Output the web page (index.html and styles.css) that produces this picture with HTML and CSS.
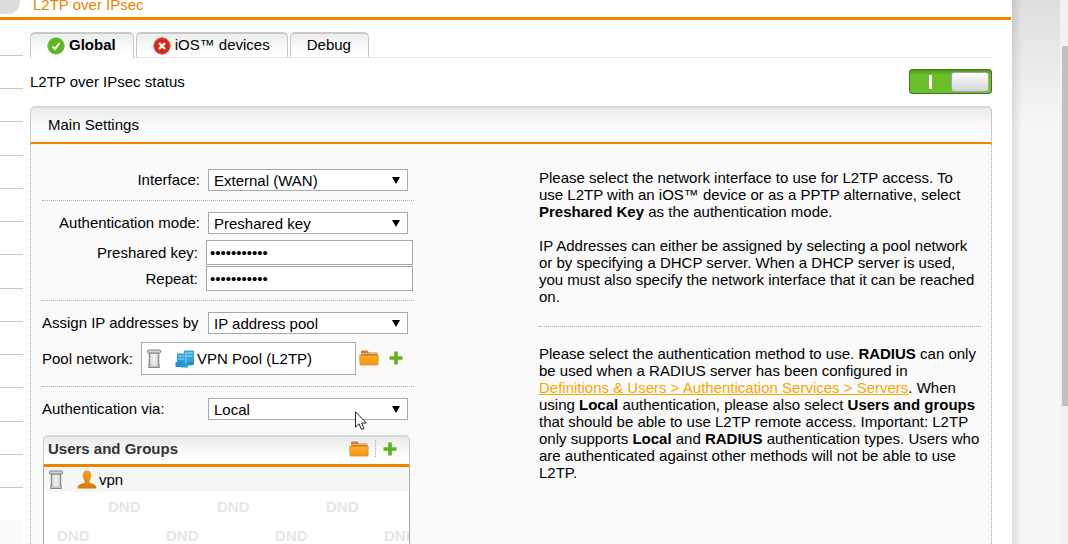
FILE: index.html
```html
<!DOCTYPE html>
<html lang="en">
<head>
    <meta charset="UTF-8">
    <meta name="viewport" content="width=device-width, initial-scale=1.0">
    <title>L2TP over IPsec</title>
    <link rel="stylesheet" href="styles.css">
</head>
<body>
    <!-- shared icons -->
    <svg class="sprite" aria-hidden="true">
        <defs>
            <linearGradient id="gFolder" x1="0" y1="0" x2="0" y2="1">
                <stop offset="0" stop-color="#fbb030"/>
                <stop offset="1" stop-color="#f9930f"/>
            </linearGradient>
            <linearGradient id="gUser" x1="0" y1="0" x2="0" y2="1">
                <stop offset="0" stop-color="#f7a11f"/>
                <stop offset="1" stop-color="#cf7a08"/>
            </linearGradient>
            <symbol id="trash" viewBox="0 0 16 20">
                <path d="M3.500 4H12.500V17H3.500Z" fill="#efefef" stroke="#8e8e8e" stroke-width="1.600"/>
                <path d="M6 6V14M10 6V14" stroke="#dadada"/>
                <rect x="1.500" y="1" width="13" height="3" rx="1" fill="#d4d4d4" stroke="#858585"/>
                <path d="M3.500 14.500L2.500 18.500H13.500L12.500 14.500" fill="#c4c4c4" stroke="#858585"/>
                <rect x="5.500" y="14.500" width="5" height="2" fill="#ededed"/>
            </symbol>
            <symbol id="folder" viewBox="0 0 20 16">
                <path d="M2 6V1.500Q2 .5 3 .5H8.500L10 2.500H18.500V6Z" fill="#c97f35"/>
                <path d="M2 3.500H18.500" stroke="#e6b27c"/>
                <path d="M.7 5.500H19.300L19 14.500Q19 15 18.300 15H1.700Q1 15 1 14.500Z" fill="url(#gFolder)" stroke="#de8a1c" stroke-width=".7"/>
            </symbol>
            <symbol id="plus" viewBox="0 0 14 14">
                <path d="M5.200 0.500H8.800V5.200H13.500V8.800H8.800V13.500H5.200V8.800H.5V5.200H5.200Z" fill="#5fb022"/>
            </symbol>
            <symbol id="network" viewBox="0 0 20 18">
                <path d="M9 .5H19V12.500L17.500 15.500H9Z" fill="#36a5de"/>
                <path d="M10.500 3H17.500M10.500 6H17.500" stroke="#a5d9f3"/>
                <path d="M12 12.500H19V14.500H12Z" fill="#1d86c2"/>
                <path d="M2 3.500H10.500V14H2Z" fill="#2b9edb"/>
                <path d="M3 6H9.500M3 9H9.500" stroke="#9dd5f2"/>
                <path d="M.5 12H8V17H.5Z" fill="#2190cf"/>
                <path d="M6.500 13.500H13V17.500H6.500Z" fill="#2b9edb"/>
                <path d="M10.800 2.500V13" stroke="#c4e6f7" stroke-width=".6"/>
            </symbol>
            <symbol id="user" viewBox="0 0 20 19">
                <path d="M10 .5C13 .5 14.500 2.600 14.200 5.500C14 8 13 9 12.500 10.500V12.500C13 14 19.500 13 19.500 18.500H.5C.5 13 7 14 7.500 12.500V10.500C7 9 6 8 5.800 5.500C5.500 2.600 7 .5 10 .5Z" fill="url(#gUser)"/>
            </symbol>
        </defs>
    </svg>

    <div class="page">
        <div class="shell">
            <header class="page-header">
                <span class="menu-corner"></span>
                <h1>L2TP over IPsec</h1>
            </header>

            <div class="columns">
                <nav class="sidebar">
                    <ul>
                        <li></li><li></li><li></li><li></li><li></li><li></li><li></li>
                        <li></li><li></li><li></li><li></li><li></li><li></li><li></li>
                    </ul>
                </nav>

                <main class="content">
                    <div class="tabs">
                        <button type="button" class="tab active">
                            <svg class="icon-status" viewBox="0 0 18 18">
                                <circle cx="9" cy="9" r="8.500" fill="#5db526"/>
                                <circle cx="9" cy="9" r="8" fill="none" stroke="#77bf49"/>
                                <path d="M5.500 9.500L8 12L12.500 6" fill="none" stroke="#fff" stroke-width="2"/>
                            </svg>
                            <span>Global</span>
                        </button>
                        <button type="button" class="tab">
                            <svg class="icon-status" viewBox="0 0 18 18">
                                <circle cx="9" cy="9" r="8.500" fill="#d3261d"/>
                                <circle cx="9" cy="9" r="8" fill="none" stroke="#dd5a50"/>
                                <path d="M6 6L12 12M12 6L6 12" stroke="#fff" stroke-width="2.400"/>
                            </svg>
                            <span>iOS™ devices</span>
                        </button>
                        <button type="button" class="tab"><span>Debug</span></button>
                    </div>

                    <div class="status-row">
                        <span id="status-label">L2TP over IPsec status</span>
                        <button type="button" class="toggle" role="switch" aria-checked="true" aria-labelledby="status-label">
                            <span class="toggle-on"></span>
                            <span class="toggle-knob"></span>
                        </button>
                    </div>

                    <section class="panel">
                        <h2 class="panel-title">Main Settings</h2>
                        <div class="panel-body">
                            <form class="settings">
                                <div class="group">
                                    <div class="row">
                                        <label for="interface">Interface:</label>
                                        <div class="select">
                                            <select id="interface"><option>External (WAN)</option></select>
                                        </div>
                                    </div>
                                </div>

                                <div class="group">
                                    <div class="row">
                                        <label for="auth-mode">Authentication mode:</label>
                                        <div class="select">
                                            <select id="auth-mode"><option>Preshared key</option></select>
                                        </div>
                                    </div>
                                    <div class="keys">
                                        <div class="row row-key">
                                            <label for="psk">Preshared key:</label>
                                            <input type="password" id="psk" value="presharedky">
                                        </div>
                                        <div class="row row-key">
                                            <label for="psk-repeat">Repeat:</label>
                                            <input type="password" id="psk-repeat" value="presharedky">
                                        </div>
                                    </div>
                                </div>

                                <div class="group">
                                    <div class="row row-left">
                                        <label for="assign">Assign IP addresses by</label>
                                        <div class="select">
                                            <select id="assign"><option>IP address pool</option></select>
                                        </div>
                                    </div>
                                    <div class="row-pool">
                                        <span class="pool-label">Pool network:</span>
                                        <div class="pool-box">
                                            <button type="button" class="icon-btn" aria-label="Remove"><svg class="icon-trash"><use href="#trash"/></svg></button>
                                            <svg class="icon-network"><use href="#network"/></svg>
                                            <span>VPN Pool (L2TP)</span>
                                        </div>
                                        <button type="button" class="icon-btn" aria-label="Browse"><svg class="icon-folder"><use href="#folder"/></svg></button>
                                        <button type="button" class="icon-btn pool-add" aria-label="Add"><svg class="icon-plus"><use href="#plus"/></svg></button>
                                    </div>
                                </div>

                                <div class="group">
                                    <div class="row row-left">
                                        <label for="auth-via">Authentication via:</label>
                                        <div class="select">
                                            <select id="auth-via"><option>Local</option></select>
                                            <svg class="cursor" viewBox="0 0 12 20">
                                                <path d="M.5 .8V16.200L4 12.800L6.500 18.500L9 17.400L6.600 12H11.300Z" fill="#fff" stroke="#222"/>
                                            </svg>
                                        </div>
                                    </div>

                                    <div class="list">
                                        <div class="list-header">
                                            <h3>Users and Groups</h3>
                                            <button type="button" class="icon-btn" aria-label="Browse"><svg class="icon-folder"><use href="#folder"/></svg></button>
                                            <span class="divider"></span>
                                            <button type="button" class="icon-btn" aria-label="Add"><svg class="icon-plus"><use href="#plus"/></svg></button>
                                        </div>
                                        <div class="list-item">
                                            <button type="button" class="icon-btn" aria-label="Remove"><svg class="icon-trash"><use href="#trash"/></svg></button>
                                            <svg class="icon-user"><use href="#user"/></svg>
                                            <span>vpn</span>
                                        </div>
                                        <div class="dropzone">
                                            <div class="dnd dnd-odd"><span>DND</span><span>DND</span><span>DND</span></div>
                                            <div class="dnd"><span>DND</span><span>DND</span><span>DND</span><span>DND</span></div>
                                        </div>
                                    </div>
                                </div>
                            </form>

                            <div class="help">
                                <div class="help-block">
                                    <p>Please select the network interface to use for L2TP access. To use L2TP with an iOS™ device or as a PPTP alternative, select <b>Preshared Key</b> as the authentication mode.</p>
                                    <p>IP Addresses can either be assigned by selecting a pool network or by specifying a DHCP server. When a DHCP server is used, you must also specify the network interface that it can be reached on.</p>
                                </div>
                                <div class="help-block">
                                    <p>Please select the authentication method to use. <b>RADIUS</b> can only be used when a RADIUS server has been configured in <a href="#">Definitions &amp; Users &gt; Authentication Services &gt; Servers</a>. When using <b>Local</b> authentication, please also select <b>Users and groups</b> that should be able to use L2TP remote access. Important: L2TP only supports <b>Local</b> and <b>RADIUS</b> authentication types. Users who are authenticated against other methods will not be able to use L2TP.</p>
                                </div>
                            </div>
                        </div>
                    </section>
                </main>
            </div>
        </div>

        <div class="gutter"></div>
        <div class="scrollbar"><div class="thumb"></div></div>
    </div>
</body>
</html>
```
FILE: styles.css
```css
:root {
    --orange: #f08200;
    --line: #a9a9a9;
    --panel: #fafafa;
}

* {
    margin: 0;
    padding: 0;
    box-sizing: border-box;
}

body {
    height: 100vh;
    overflow: hidden;
    background: #fff;
    color: #000;
    font: 15px/17px "Liberation Sans", Arial, sans-serif;
}

button,
input,
select {
    font: inherit;
    color: inherit;
}

button {
    border: none;
    background: none;
    cursor: pointer;
}

svg {
    display: block;
    flex: none;
}

.sprite {
    position: absolute;
    width: 0;
    height: 0;
}

.page {
    display: flex;
    height: 100%;
}

.shell {
    flex: 1;
    display: flex;
    flex-direction: column;
    min-width: 0;
}

/* header */
.page-header {
    display: flex;
    align-items: flex-end;
    gap: 13px;
    flex: none;
    height: 20px;
    margin-right: 1px;
    border-bottom: 3px solid var(--orange);
}

.menu-corner {
    align-self: flex-start;
    width: 20px;
    height: 14px;
    background: #dcdcdc;
    border-bottom-right-radius: 12px;
}

.page-header h1 {
    padding-bottom: 4px;
    color: var(--orange);
    font-size: 15px;
    font-weight: normal;
}

.columns {
    flex: 1;
    display: flex;
    min-height: 0;
}

/* sidebar */
.sidebar {
    flex: none;
    width: 23px;
    background: #fafafa;
}

.sidebar ul {
    list-style: none;
    background: #fdfdfd;
    padding-bottom: 32px;
}

.sidebar li {
    height: 33px;
    border-bottom: 1px solid #c8c8c8;
}

.sidebar li:nth-child(4n) {
    height: 34px;
}

.sidebar li:first-child {
    height: 36px;
}

.content {
    flex: 1;
    min-width: 0;
    padding: 12px 20px 0 7px;
}

/* tabs */
.tabs {
    display: flex;
    gap: 2px;
    border-bottom: 1px solid #e6e6e6;
}

.tab {
    display: flex;
    align-items: center;
    gap: 4px;
    height: 25px;
    padding: 0 17px 0 16px;
    border: 1px solid #c8c8c8;
    border-top-width: 2px;
    border-bottom: none;
    border-radius: 5px 5px 0 0;
    background: linear-gradient(#eaeeed, #fff 80%);
    white-space: nowrap;
}

.tab span {
    padding-bottom: 3px;
}

.tab.active {
    height: 26px;
    margin-bottom: -1px;
    font-weight: bold;
}

.tab.active span {
    padding-bottom: 4px;
}

.icon-status {
    width: 18px;
    height: 18px;
}

/* status */
.status-row {
    display: flex;
    align-items: center;
    justify-content: space-between;
    margin: 11px 0 12px;
}

.toggle {
    display: flex;
    align-items: center;
    justify-content: space-between;
    width: 83px;
    height: 25px;
    padding: 0 2px 0 19px;
    border: 1px solid #43741f;
    border-radius: 3px;
    background: linear-gradient(#4f951c, #6abf2a 5px);
}

.toggle-on {
    width: 3px;
    height: 14px;
    background: #fff;
}

.toggle-knob {
    width: 38px;
    height: 20px;
    border: 1px solid #a4a4a4;
    border-radius: 3px;
    background: linear-gradient(#fff, #d2d4d4);
}

/* panel */
.panel-title {
    height: 38px;
    padding: 8px 17px;
    border: 1px solid #c8c8c8;
    border-top: 2px solid #d8dad9;
    border-bottom: 2px solid var(--orange);
    border-radius: 5px 5px 0 0;
    background: linear-gradient(#e9eceb, #fff 70%);
    font-size: 15px;
    font-weight: normal;
}

.panel-body {
    display: grid;
    grid-template-columns: 372px 1fr;
    gap: 125px;
    padding: 14px 10px 40px 11px;
    border: 1px dotted var(--line);
    border-top: none;
    background: var(--panel);
}

.group {
    padding: 11px 0 9px;
    border-bottom: 1px dotted var(--line);
}

.group:last-child {
    border-bottom: none;
}

.row {
    display: grid;
    grid-template-columns: 158px 200px;
    gap: 8px;
    align-items: center;
    text-align: right;
    white-space: nowrap;
}

.row label {
    padding-bottom: 1px;
}

.row-key {
    grid-template-columns: 156px 207px;
}

.row-left {
    text-align: left;
}

.keys {
    display: grid;
    gap: 1px;
    margin-top: 6px;
}

.select {
    position: relative;
    height: 22px;
}

.select::after {
    content: "";
    position: absolute;
    top: 8px;
    right: 8px;
    border: 4px solid transparent;
    border-top: 7px solid #000;
    border-bottom: none;
    pointer-events: none;
}

.select select {
    display: block;
    width: 100%;
    height: 22px;
    padding: 0 5px;
    appearance: none;
    border: 1px solid var(--line);
    border-radius: 0;
    background: #fff;
}

.row input {
    height: 25px;
    padding: 0 3px;
    border: 1px solid var(--line);
    background: #fff;
}

.row-pool {
    display: flex;
    align-items: center;
    margin: 8px 0 2px;
}

.pool-label {
    width: 99px;
}

.pool-box {
    display: flex;
    align-items: center;
    width: 215px;
    height: 33px;
    margin-right: 3px;
    padding: 0 4px;
    border: 1px solid var(--line);
    background: #fff;
}

.row-pool > .icon-btn {
    padding-bottom: 1px;
}

.pool-add {
    margin-left: 10px;
}

.icon-trash {
    width: 16px;
    height: 20px;
}

.icon-network {
    width: 20px;
    height: 18px;
    margin: 0 2px 0 13px;
}

.icon-folder {
    width: 20px;
    height: 16px;
}

.icon-plus {
    width: 14px;
    height: 14px;
}

.icon-user {
    width: 20px;
    height: 19px;
    margin: 0 2px 0 13px;
}

.cursor {
    position: absolute;
    top: 13px;
    left: 147px;
    z-index: 1;
    width: 12px;
    height: 20px;
    pointer-events: none;
}

/* users and groups */
.list {
    width: 367px;
    margin: 15px 0 0 1px;
}

.list-header {
    display: flex;
    align-items: center;
    height: 32px;
    padding: 0 12px 4px 4px;
    border: 1px solid #c8c8c8;
    border-top: 2px solid #d8dad9;
    border-bottom: 3px solid var(--orange);
    border-radius: 5px 5px 0 0;
    background: linear-gradient(#e9eceb, #fff 80%);
}

.list-header h3 {
    flex: 1;
    color: #333;
    font-size: 15px;
}

.divider {
    height: 17px;
    margin: 0 7px 0 6px;
    border-left: 1px dotted var(--line);
}

.list-item {
    display: flex;
    align-items: center;
    height: 25px;
    padding: 0 4px;
    border: solid var(--line);
    border-width: 0 1px;
    background: #f6f6f6;
}

.dropzone {
    min-height: 120px;
    overflow: hidden;
    border: 1px solid var(--line);
    border-top: none;
    background: #fff;
}

.dnd {
    display: grid;
    grid-auto-flow: column;
    grid-auto-columns: 109px;
    padding-left: 13px;
    color: #e6e6e6;
    font-weight: bold;
    line-height: 29px;
}

.dnd-odd {
    padding-left: 64px;
}

/* help */
.help-block {
    padding: 11px 0 21px;
}

.help-block + .help-block {
    padding-top: 18px;
    border-top: 1px dotted var(--line);
}

.help-block p + p {
    margin-top: 17px;
}

.help a {
    color: #ffa500;
}

/* right edge */
.gutter {
    flex: none;
    width: 48px;
    background: linear-gradient(to right, rgba(0, 0, 0, 0.1), transparent 10px), linear-gradient(#dedede, #f7f7f7 130px);
}

.scrollbar {
    flex: none;
    width: 8px;
    padding: 46px 0 0 2px;
    background: #f1f1f1;
}

.thumb {
    height: 360px;
    background: #c1c1c1;
}
```
